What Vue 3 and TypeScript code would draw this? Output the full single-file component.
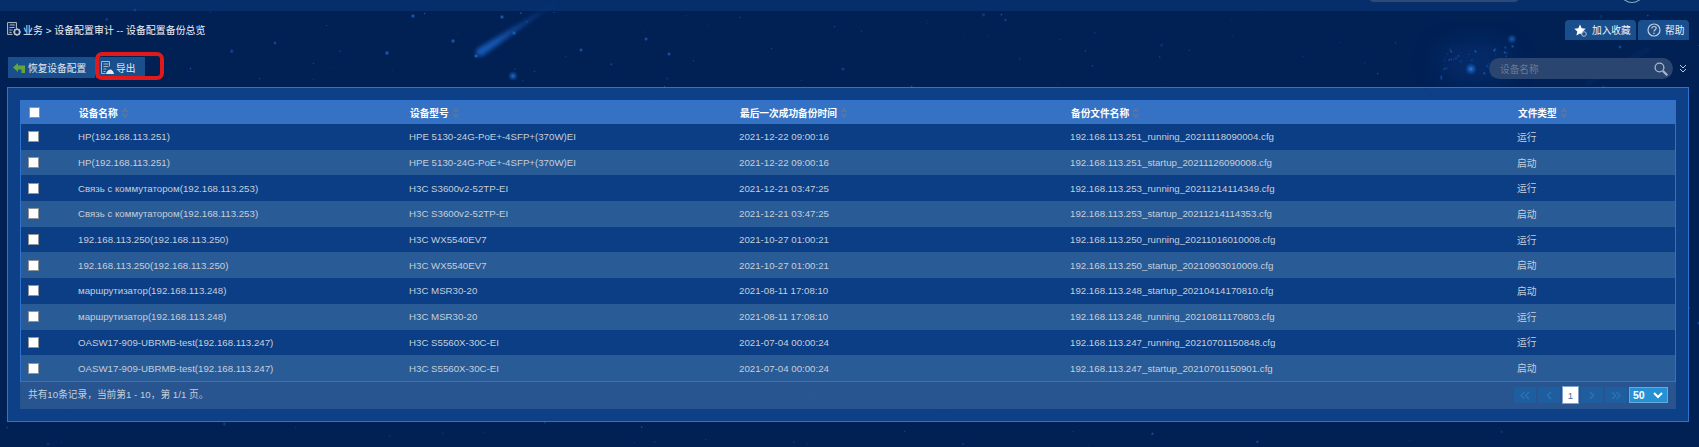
<script setup lang="ts">
interface Row { name: string; model: string; time: string; file: string; type: string }
interface Star { x: number; y: number; r: number; o: number }
const rows: Row[] = [
  { name: 'HP(192.168.113.251)', model: 'HPE 5130-24G-PoE+-4SFP+(370W)EI', time: '2021-12-22 09:00:16', file: '192.168.113.251_running_20211118090004.cfg', type: '运行' },
  { name: 'HP(192.168.113.251)', model: 'HPE 5130-24G-PoE+-4SFP+(370W)EI', time: '2021-12-22 09:00:16', file: '192.168.113.251_startup_20211126090008.cfg', type: '启动' },
  { name: 'Связь с коммутатором(192.168.113.253)', model: 'H3C S3600v2-52TP-EI', time: '2021-12-21 03:47:25', file: '192.168.113.253_running_20211214114349.cfg', type: '运行' },
  { name: 'Связь с коммутатором(192.168.113.253)', model: 'H3C S3600v2-52TP-EI', time: '2021-12-21 03:47:25', file: '192.168.113.253_startup_20211214114353.cfg', type: '启动' },
  { name: '192.168.113.250(192.168.113.250)', model: 'H3C WX5540EV7', time: '2021-10-27 01:00:21', file: '192.168.113.250_running_20211016010008.cfg', type: '运行' },
  { name: '192.168.113.250(192.168.113.250)', model: 'H3C WX5540EV7', time: '2021-10-27 01:00:21', file: '192.168.113.250_startup_20210903010009.cfg', type: '启动' },
  { name: 'маршрутизатор(192.168.113.248)', model: 'H3C MSR30-20', time: '2021-08-11 17:08:10', file: '192.168.113.248_startup_20210414170810.cfg', type: '启动' },
  { name: 'маршрутизатор(192.168.113.248)', model: 'H3C MSR30-20', time: '2021-08-11 17:08:10', file: '192.168.113.248_running_20210811170803.cfg', type: '运行' },
  { name: 'OASW17-909-UBRMB-test(192.168.113.247)', model: 'H3C S5560X-30C-EI', time: '2021-07-04 00:00:24', file: '192.168.113.247_running_20210701150848.cfg', type: '运行' },
  { name: 'OASW17-909-UBRMB-test(192.168.113.247)', model: 'H3C S5560X-30C-EI', time: '2021-07-04 00:00:24', file: '192.168.113.247_startup_20210701150901.cfg', type: '启动' },
]
const heads = ['设备名称', '设备型号', '最后一次成功备份时间', '备份文件名称', '文件类型']

let seed = 4711
const rnd = (): number => {
  seed = (seed * 16807) % 2147483647
  return seed / 2147483647
}
const stars: Star[] = []
for (let i = 0; i < 420; i++) {
  stars.push({ x: rnd() * 1699, y: rnd() * 447, r: 0.8 + rnd() * rnd() * 1.8, o: 0.2 + rnd() * 0.5 })
}
for (let i = 0; i < 40; i++) {
  stars.push({ x: 1440 + rnd() * 70, y: 45 + rnd() * 35, r: 0.8 + rnd() * 1.2, o: 0.3 + rnd() * 0.4 })
}
const fixed: Star[] = [
  { x: 513, y: 76, r: 5, o: 0.85 }, { x: 1471, y: 69, r: 6, o: 1 }, { x: 1512, y: 39, r: 5, o: 0.7 },
  { x: 413, y: 16, r: 2.4, o: 0.9 }, { x: 502, y: 17, r: 2.4, o: 0.9 }, { x: 453, y: 41, r: 2.4, o: 0.9 },
  { x: 476, y: 56, r: 2.4, o: 1 }, { x: 514, y: 33, r: 2.4, o: 0.9 }, { x: 387, y: 53, r: 2.6, o: 0.9 },
  { x: 581, y: 50, r: 2.2, o: 0.8 }, { x: 646, y: 39, r: 2.2, o: 0.8 }, { x: 669, y: 54, r: 2.2, o: 0.8 },
  { x: 135, y: 10, r: 2, o: 0.7 }, { x: 275, y: 43, r: 2, o: 0.7 }, { x: 1620, y: 47, r: 2, o: 0.7 },
]
stars.push(...fixed)
</script>

<template>
  <div class="page">
    <svg class="sky" width="1699" height="447" viewBox="0 0 1699 447" aria-hidden="true">
      <defs>
        <radialGradient id="star">
          <stop offset="0" stop-color="#2a7fe6" />
          <stop offset="0.45" stop-color="#1a62c0" stop-opacity="0.65" />
          <stop offset="1" stop-color="#1a62c0" stop-opacity="0" />
        </radialGradient>
        <linearGradient id="trail" x1="476" y1="55" x2="565" y2="-3" gradientUnits="userSpaceOnUse">
          <stop offset="0" stop-color="#1c66cc" stop-opacity="0.85" />
          <stop offset="0.22" stop-color="#1a60c2" stop-opacity="0.85" />
          <stop offset="0.6" stop-color="#1a60c2" stop-opacity="0.35" />
          <stop offset="1" stop-color="#1a60c2" stop-opacity="0" />
        </linearGradient>
        <filter id="soft" x="-30%" y="-30%" width="160%" height="160%"><feGaussianBlur stdDeviation="2" /></filter>
        <filter id="haze" x="-50%" y="-50%" width="200%" height="200%"><feGaussianBlur stdDeviation="14" /></filter>
      </defs>
      <ellipse cx="1475" cy="62" rx="38" ry="20" fill="#0f4aa0" opacity="0.3" filter="url(#haze)" />
      <path d="M477 49 L563 -3 L564 -2 L482 56 Q474 57 477 49Z" fill="url(#trail)" filter="url(#soft)" />
      <path d="M1585 84 L1650 48" stroke="#1a58b0" stroke-opacity="0.35" stroke-width="1.500" filter="url(#soft)" />
      <circle v-for="(s, i) in stars" :key="i" :cx="s.x" :cy="s.y" :r="s.r" :opacity="s.o" fill="url(#star)" />
    </svg>

    <div class="content">
      <div class="top-strip">
        <span class="strip-search"></span>
        <span class="strip-avatar"></span>
      </div>
      <div class="title-row">
        <div class="crumb">
          <svg width="14" height="14" viewBox="0 0 14 14">
            <path d="M.5.500h9v6M.5.500v12h5" fill="#1c3a66" stroke="#a9b0bb" />
            <path d="M2.500 3h5M2.500 5.500h5M2.500 8h3M2.500 10.500h2" stroke="#a9b0bb" />
            <circle cx="10" cy="10" r="2.700" fill="none" stroke="#b9bfc8" stroke-width="1.600" />
            <path d="M10 6v1M10 13v1M6 10h1M13 10h1M7.300 7.300l.7.700M12 12l.7.700M7.300 12.700l.7-.7M12 8l.7-.7" stroke="#b9bfc8" />
          </svg>
          <span>业务 &gt; 设备配置审计 -- 设备配置备份总览</span>
        </div>
        <div class="top-btns">
          <div class="top-btn fav">
            <svg width="13" height="13" viewBox="0 0 13 13">
              <path d="M6 .500l1.700 3.700 4 .5-3 2.700.9 4L6 9.400 2.400 11.400l.9-4-3-2.700 4-.5z" fill="#fff" />
              <circle cx="10" cy="10" r="2.300" fill="#1a4f8e" stroke="#aebfd6" />
            </svg>
            <span>加入收藏</span>
          </div>
          <div class="top-btn help">
            <svg width="14" height="14" viewBox="0 0 14 14">
              <circle cx="7" cy="7" r="6" fill="none" stroke="#c4ccd8" stroke-width="1.200" />
              <path d="M4.800 5.400C4.800 4 5.800 3.500 7 3.500S9.200 4.200 9.200 5.300C9.200 6.800 7 6.800 7 8.600" fill="none" stroke="#c4ccd8" stroke-width="1.200" />
              <circle cx="7" cy="10.300" r=".8" fill="#c4ccd8" />
            </svg>
            <span>帮助</span>
          </div>
        </div>
      </div>
      <div class="tool-row">
        <div class="tools">
          <div class="tool restore">
            <svg width="12" height="10" viewBox="0 0 12 10"><path d="M0 4.500L5 0v2.500h7V10H8.500V6.500H5V9z" fill="#64a53c" /></svg>
            <span>恢复设备配置</span>
          </div>
          <div class="tool export">
            <svg width="13" height="14" viewBox="0 0 13 14">
              <path d="M.5.500h8v5M.5.500v12h4" fill="none" stroke="#a9b4c4" />
              <path d="M2.500 3h5M2.500 5.500h5M2.500 8h3M2.500 10.500h2" stroke="#a9b4c4" />
              <path d="M5 13c.6-3 2.600-4.500 4.500-4.500 1.400 0 2.800 1.500 3.500 4.500z" fill="#e3e8ef" />
            </svg>
            <span>导出</span>
            <span class="mark"></span>
          </div>
        </div>
        <div class="search-wrap">
          <div class="search">
            <span class="ph">设备名称</span>
            <svg width="14" height="14" viewBox="0 0 14 14">
              <circle cx="5.500" cy="5.500" r="4.400" fill="none" stroke="#aeb8c6" stroke-width="1.300" />
              <path d="M9 9l4.300 4.300" stroke="#aeb8c6" stroke-width="2.200" />
            </svg>
          </div>
          <svg width="8" height="9" viewBox="0 0 8 9"><path d="M1 1l3 3 3-3M1 5l3 3 3-3" fill="none" stroke="#bcc5d1" /></svg>
        </div>
      </div>
      <div class="panel">
        <div class="grid">
          <div class="head">
            <div class="cb-cell"><span class="cb head-cb"></span></div>
            <div v-for="h in heads" :key="h" class="hcell">
              <span>{{ h }}</span>
              <svg width="6" height="10" viewBox="0 0 6 10"><path d="M.7 4L3 1l2.300 3M.7 6L3 9l2.300-3" fill="none" stroke="#62769a" stroke-width="1.400" /></svg>
            </div>
          </div>
          <div v-for="(r, i) in rows" :key="i" class="row" :class="{ alt: i % 2 === 1 }">
            <div class="cb-cell"><span class="cb"></span></div>
            <div class="cell">{{ r.name }}</div>
            <div class="cell">{{ r.model }}</div>
            <div class="cell">{{ r.time }}</div>
            <div class="cell">{{ r.file }}</div>
            <div class="cell">{{ r.type }}</div>
          </div>
        </div>
        <div class="foot">
          <span>共有10条记录，当前第1 - 10，第 1/1 页。</span>
          <div class="pager">
            <span class="pg"><svg width="10" height="9" viewBox="0 0 10 9"><path d="M4.500 1L1 4.500 4.500 8M9 1L5.500 4.500 9 8" fill="none" stroke="#2a72b5" stroke-width="1.500" /></svg></span>
            <span class="pg"><svg width="6" height="9" viewBox="0 0 6 9"><path d="M5 1L1.500 4.500 5 8" fill="none" stroke="#2a72b5" stroke-width="1.500" /></svg></span>
            <span class="pg cur">1</span>
            <span class="pg"><svg width="6" height="9" viewBox="0 0 6 9"><path d="M1 1l3.500 3.500L1 8" fill="none" stroke="#2a72b5" stroke-width="1.500" /></svg></span>
            <span class="pg"><svg width="10" height="9" viewBox="0 0 10 9"><path d="M1 1l3.500 3.500L1 8M5.500 1L9 4.500 5.500 8" fill="none" stroke="#2a72b5" stroke-width="1.500" /></svg></span>
            <span class="size">
              <span>50</span>
              <svg width="10" height="7" viewBox="0 0 10 7"><path d="M1 1l4 4 4-4" fill="none" stroke="#fff" stroke-width="2" /></svg>
            </span>
          </div>
        </div>
      </div>
    </div>
  </div>
</template>

<style>
html, body { margin: 0; background: #012054; }
</style>

<style scoped>
.page {
  width: 1699px; height: 447px; overflow: hidden; position: relative; background: #012054;
  font-family: "Liberation Sans", "Noto Sans CJK SC", sans-serif; font-size: 9.7px; color: #c6ced9;
  white-space: nowrap;
}
.sky { position: absolute; left: 0; top: 0; }
.content { position: relative; }
.top-strip { height: 11px; background: rgba(10, 60, 130, .5); position: relative; }
.strip-search { position: absolute; left: 1368px; top: -10px; width: 152px; height: 12px; border-radius: 6px; background: #2d4a78; }
.strip-avatar { position: absolute; left: 1622px; top: -12px; width: 20px; height: 15px; border-radius: 50%; border: 1px solid #7fb0b8; box-sizing: border-box; }
.title-row { display: flex; justify-content: space-between; height: 39px; padding: 9px 10px 0 7px; box-sizing: border-box; border-left: 0; }
.crumb { display: flex; align-items: center; gap: 2px; height: 18px; font-size: 9.95px; color: #eef2f7; }
.top-btns { display: flex; gap: 2px; }
.top-btn { display: flex; align-items: center; height: 20px; background: #1a4f8e; color: #f0f4f8; border-radius: 4px 4px 0 0; box-sizing: border-box; }
.fav { width: 71px; padding-left: 9px; gap: 5px; }
.help { width: 51px; padding-left: 9px; gap: 4px; }
.tool-row { display: flex; justify-content: space-between; height: 37px; padding: 7px 12px 0 8px; box-sizing: border-box; }
.tools { display: flex; gap: 1px; }
.tool { display: flex; align-items: center; height: 21px; background: #1a4f8e; color: #e6ebf2; position: relative; box-sizing: border-box; }
.restore { width: 87px; padding-left: 5px; gap: 3px; }
.export { width: 49px; padding-left: 5px; gap: 2px; }
.mark { position: absolute; left: -1px; top: -5px; width: 69px; height: 28px; border: 4px solid #e2191b; border-radius: 7px; box-sizing: border-box; }
.search-wrap { display: flex; align-items: center; gap: 6px; height: 21px; margin-top: 1px; }
.search { width: 184px; height: 21px; border-radius: 11px; background: #2a4570; display: flex; align-items: center; justify-content: space-between; padding: 0 5px 0 11px; box-sizing: border-box; }
.ph { color: #6b7a90; }
.panel { margin: 0 10px 0 7px; height: 335px; box-sizing: border-box; border: 1px solid #2f73cf; background: rgba(15, 68, 142, .88); padding: 12px 0 0 12px; }
.grid { width: 1656px; box-sizing: border-box; border: 1px solid #2f73cf; border-top: 0; }
.head, .row { display: grid; grid-template-columns: 57px 331px 330px 331px 447px 1fr; align-items: center; }
.head { height: 24px; background: #3572c4; font-weight: 700; color: #fff; border-top: 1px solid #2f73cf; box-sizing: border-box; }
.hcell { display: flex; align-items: center; gap: 4px; padding-left: 1px; }
.row { height: 25.7px; background: #0c3e85; }
.row.alt { background: #295b96; }
.cb-cell { padding-left: 7px; display: flex; align-items: center; }
.cb { width: 9px; height: 9px; background: #fff; border: 1px solid #8f949b; display: block; }
.head-cb { margin-left: 1px; }
.foot { height: 27px; background: rgba(93, 124, 160, .35); display: flex; align-items: center; justify-content: space-between; padding: 0 8px 3px; width: 1656px; box-sizing: border-box; }
.pager { display: flex; gap: 2px; align-items: center; margin-top: 3px; }
.pg { width: 22px; height: 16px; background: #1e5e9e; display: flex; align-items: center; justify-content: center; }
.pg.cur { width: 17px; height: 18px; background: #fff; color: #3d6fa8; border: 1px solid #7aa2d0; box-sizing: border-box; }
.size { width: 39px; height: 16px; background: #2590d3; border: 1px solid #6aa8dc; color: #fff; display: flex; align-items: center; justify-content: space-between; padding: 0 4px 0 3px; font-size: 10.5px; font-weight: 700; box-sizing: border-box; }
</style>
